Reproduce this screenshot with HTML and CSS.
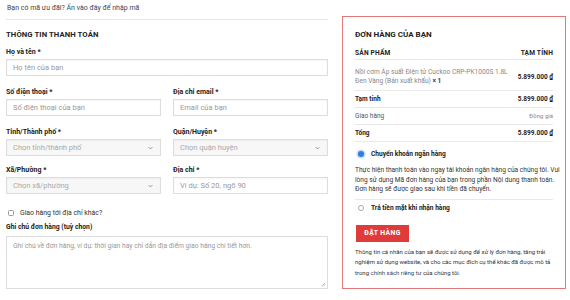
FILE: index.html
```html
<!DOCTYPE html>
<html lang="vi">
<head>
<meta charset="utf-8">
<link rel="stylesheet" href="styles.css">
</head>
<body>
<div class="page">
  <div class="billing">
    <div class="coupon">Bạn có mã ưu đãi? <a href="#">Ấn vào đây để nhập mã</a></div>
    <h3 class="title">THÔNG TIN THANH TOÁN</h3>
    <div class="field">
      <label>Họ và tên <span class="req">*</span></label>
      <div class="input">Họ tên của bạn</div>
    </div>
    <div class="row">
      <div class="field">
        <label>Số điện thoại <span class="req">*</span></label>
        <div class="input">Số điện thoại của bạn</div>
      </div>
      <div class="field">
        <label>Địa chỉ email <span class="req">*</span></label>
        <div class="input">Email của bạn</div>
      </div>
    </div>
    <div class="row tight">
      <div class="field">
        <label>Tỉnh/Thành phố <span class="req">*</span></label>
        <div class="input select">Chọn tỉnh/thành phố<svg class="chev" viewBox="0 0 8 5" width="5" height="4"><path d="M1 1l3 3 3-3" fill="none" stroke="#777" stroke-width="1.2"/></svg></div>
      </div>
      <div class="field">
        <label>Quận/Huyện <span class="req">*</span></label>
        <div class="input select">Chọn quận huyện<svg class="chev" viewBox="0 0 8 5" width="5" height="4"><path d="M1 1l3 3 3-3" fill="none" stroke="#777" stroke-width="1.2"/></svg></div>
      </div>
    </div>
    <div class="row">
      <div class="field">
        <label>Xã/Phường <span class="req">*</span></label>
        <div class="input select">Chọn xã/phường<svg class="chev" viewBox="0 0 8 5" width="5" height="4"><path d="M1 1l3 3 3-3" fill="none" stroke="#777" stroke-width="1.2"/></svg></div>
      </div>
      <div class="field">
        <label>Địa chỉ <span class="req">*</span></label>
        <div class="input">Ví dụ: Số 20, ngõ 90</div>
      </div>
    </div>
    <div class="check"><span class="box"></span>Giao hàng tới địa chỉ khác?</div>
    <label class="note-label">Ghi chú đơn hàng (tuỳ chọn)</label>
    <div class="textarea">Ghi chú về đơn hàng, ví dụ: thời gian hay chỉ dẫn địa điểm giao hàng chi tiết hơn.<svg class="grip" viewBox="0 0 6 6" width="5" height="5"><path d="M5 1L1 5M5 3L3 5" stroke="#999" stroke-width="0.8"/></svg></div>
  </div>

  <div class="order">
    <h3 class="order-title">ĐƠN HÀNG CỦA BẠN</h3>
    <div class="orow head"><span>SẢN PHẨM</span><span>TẠM TÍNH</span></div>
    <div class="orow item"><span class="pname">Nồi cơm Áp suất Điện tử Cuckoo CRP-PK1000S 1.8L Đen Vàng (Bản xuất khẩu) <b>× 1</b></span><span class="price">5.899.000 ₫</span></div>
    <div class="orow"><span class="lbl">Tạm tính</span><span class="price">5.899.000 ₫</span></div>
    <div class="orow"><span class="plain">Giao hàng</span><span class="muted">Đồng giá</span></div>
    <div class="orow"><span class="lbl">Tổng</span><span class="price">5.899.000 ₫</span></div>
    <div class="pay">
      <div class="radio-row"><span class="radio on"></span>Chuyển khoản ngân hàng</div>
      <p class="pay-desc">Thực hiện thanh toán vào ngay tài khoản ngân hàng của chúng tôi. Vui<br>lòng sử dụng Mã đơn hàng của bạn trong phần Nội dung thanh toán.<br>Đơn hàng sẽ được giao sau khi tiền đã chuyển.</p>
    </div>
    <div class="radio-row second"><span class="radio"></span>Trả tiền mặt khi nhận hàng</div>
    <button class="btn">ĐẶT HÀNG</button>
    <p class="privacy">Thông tin cá nhân của bạn sẽ được sử dụng để xử lý đơn hàng, tăng trải nghiệm sử dụng website, và cho các mục đích cụ thể khác đã được mô tả trong <a href="#">chính sách riêng tư</a> của chúng tôi.</p>
  </div>
</div>
</body>
</html>
```
FILE: styles.css
```css
* { box-sizing: border-box; }
html, body { margin: 0; padding: 0; background: #fff; }
body { font-family: Roboto, "Noto Sans", "DejaVu Sans", sans-serif; color: #333; font-size: 7px; }
a { color: #334862; text-decoration: none; }

.page { display: flex; align-items: flex-start; padding: 0 4px 0 6px; gap: 14px; }

.billing { width: 322px; flex: none; }
.coupon { font-size: 7px; line-height: 11px; padding: 3px 0 5px 1px; border-bottom: 1px solid #e6e6e6; color: #444; }
.title { margin: 9px 0 6px; font-size: 7.7px; line-height: 12px; font-weight: 700; color: #222; letter-spacing: 0.1px; }

.row { display: flex; gap: 12px; }
.row .field { flex: 1; }
.field { margin-bottom: 11px; }
.row.tight .field { margin-bottom: 9px; }
label { display: block; font-size: 7px; line-height: 10px; font-weight: 700; color: #222; margin-bottom: 2px; }
.req { color: #222; }
.input { height: 17px; border: 1px solid #ddd; font-size: 7.5px; color: #999; padding: 0 6px; line-height: 15px; display: flex; align-items: center; justify-content: space-between; box-shadow: inset 0 1px 2px rgba(0,0,0,0.04); }
.select { background: #f7f7f7; color: #aaa; }
.chev { margin-right: 1px; }

.check { display: flex; align-items: center; font-size: 6.9px; line-height: 10px; color: #333; margin-top: 3px; margin-left: 2px; }
.box { width: 6px; height: 6px; border: 1px solid #999; border-radius: 1.5px; margin-right: 6px; }
.note-label { margin-top: 4px; margin-bottom: 4px; font-size: 6.8px; }
.textarea { position: relative; height: 53px; border: 1px solid #ddd; font-size: 6.75px; color: #999; padding: 5px 6px; line-height: 9px; }
.grip { position: absolute; right: 1px; bottom: 1px; }

.order { width: 224px; flex: none; margin-top: 16px; border: 1px solid #e07a78; padding: 12px 12px 10px 12px; }
.order-title { margin: 0 0 7px; font-size: 8px; line-height: 12px; font-weight: 700; color: #222; }
.orow { display: flex; justify-content: space-between; align-items: center; border-bottom: 1px solid #e9e9e9; padding: 3px 0 3px; line-height: 10px; font-size: 6.5px; }
.orow.head { padding: 0 0 1px; font-weight: 700; color: #222; font-size: 6.6px; letter-spacing: 0.2px; }
.orow.item { padding: 8px 0 4px; }
.pname { color: #888; width: 156px; line-height: 9px; font-size: 6.6px; }
.pname b { color: #444; font-weight: 700; }
.price { font-weight: 700; color: #222; font-size: 6.5px; }
.lbl { font-weight: 700; color: #222; }
.plain { color: #555; }
.muted { color: #888; font-size: 6px; }

.pay { border-bottom: 1px solid #e9e9e9; padding: 7px 0 4px; }
.radio-row { display: flex; align-items: center; font-weight: 700; font-size: 6.6px; line-height: 10px; color: #222; }
.radio { width: 6px; height: 6px; border: 1px solid #aaa; border-radius: 50%; margin: 0 7px 0 3px; flex: none; }
.radio.on { border: none; background: #2a7fe0; box-shadow: 0 0 0 1.6px #c9dcf7; }
.pay-desc { margin: 7px -12px 0 0; line-height: 9.6px; font-size: 6.6px; color: #333; white-space: nowrap; }
.radio-row.second { margin-top: 3px; }

.btn { display: block; margin: 12px 0 5px 1px; width: 53px; height: 17px; border: none; background: #e03b3b; color: #fff; font-family: inherit; font-size: 6.8px; font-weight: 700; letter-spacing: 0.4px; padding: 0; }
.privacy { margin: 0 -3px 0 0; font-size: 6px; line-height: 10.5px; color: #333; }
```
